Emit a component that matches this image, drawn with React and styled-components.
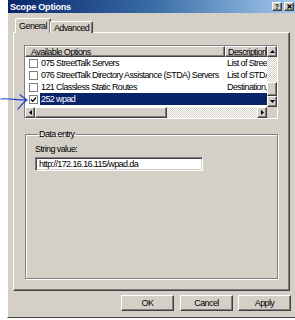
import React from "react";
import styled, { createGlobalStyle, css } from "styled-components";

const GREY = "#d4d0c8";
const NAVY = "#0a246a";

const GlobalStyle = createGlobalStyle`
  html, body { margin: 0; padding: 0; background: #fff; }
  body { font-family: "Liberation Sans", Arial, sans-serif; font-size: 9px; letter-spacing: -0.6px; color: #000; }
  * { box-sizing: border-box; }
`;

const raised = css`
  border: 1px solid;
  border-color: #fff #404040 #404040 #fff;
  box-shadow: inset -1px -1px 0 #808080;
  background: ${GREY};
`;

const sunken = css`
  border: 1px solid;
  border-color: #808080 #fff #fff #808080;
  box-shadow: inset 1px 1px 0 #404040, inset -1px -1px 0 ${GREY};
`;

const checker = css`
  background: repeating-conic-gradient(#fff 0 25%, ${GREY} 0 50%) 0 0 / 2px 2px;
`;

const Page = styled.div`
  position: relative;
  width: 295px;
  height: 320px;
  overflow: hidden;
  padding-left: 7px;
`;

const Dialog = styled.div`
  width: 292px;
  height: 318px;
  background: ${GREY};
  border-left: 1px solid #fff;
  border-bottom: 1px solid #404040;
  display: flex;
  flex-direction: column;
`;

const TitleBar = styled.div`
  height: 13px;
  flex: none;
  display: flex;
  align-items: center;
  justify-content: space-between;
  padding: 0 5px 0 2px;
  background: linear-gradient(90deg, ${NAVY} 0%, #3a6ea5 50%, #a6caf0 100%);
`;

const Title = styled.span`
  color: #fff;
  font-weight: bold;
  font-size: 9px;
  letter-spacing: -0.2px;
`;

const TitleButtons = styled.div`
  display: flex;
  gap: 2px;
`;

const CaptionButton = styled.div`
  ${raised};
  width: 10px;
  height: 9px;
  display: flex;
  align-items: center;
  justify-content: center;
  font-size: 7px;
  font-weight: bold;
  line-height: 1;
  letter-spacing: 0;
`;

const Body = styled.div`
  flex: 1;
  display: flex;
  flex-direction: column;
  padding: 5px 0 0 5px;
`;

const TabStrip = styled.div`
  display: flex;
  align-items: flex-end;
  height: 15px;
  padding-left: 2px;
  position: relative;
  z-index: 1;
  margin-bottom: -1px;
`;

const Tab = styled.div`
  border: 1px solid;
  border-color: #fff #404040 transparent #fff;
  border-bottom: none;
  border-radius: 2px 2px 0 0;
  background: ${GREY};
  display: flex;
  align-items: center;
  justify-content: center;
  width: ${(p) => p.$w}px;
  height: ${(p) => (p.$active ? 15 : 12)}px;
  margin-left: ${(p) => (p.$active ? 0 : -1)}px;
  padding-top: ${(p) => (p.$active ? 0 : 1)}px;
  box-shadow: inset -1px 0 0 #808080;
`;

const Panel = styled.div`
  width: 277px;
  height: 259px;
  border: 1px solid;
  border-color: #fff #404040 #404040 #fff;
  box-shadow: inset -1px -1px 0 #808080;
  display: flex;
  flex-direction: column;
  padding: 12px 0 0 10px;
`;

const ListView = styled.div`
  border: 1px solid;
  border-color: #808080 #fff #fff #808080;
  width: 254px;
  height: 74px;
  background: #fff;
  display: grid;
  grid-template-columns: 1fr 10px;
  grid-template-rows: 1fr 11px;
  overflow: hidden;
`;

const ListMain = styled.div`
  overflow: hidden;
  display: flex;
  flex-direction: column;
`;

const Header = styled.div`
  display: flex;
  height: 11px;
  flex: none;
`;

const HeaderCell = styled.div`
  ${raised};
  height: 11px;
  width: ${(p) => (p.$w ? `${p.$w}px` : "auto")};
  flex: ${(p) => (p.$w ? "none" : 1)};
  padding-left: ${(p) => (p.$w ? 5 : 2)}px;
  display: flex;
  align-items: center;
  white-space: nowrap;
  overflow: hidden;
`;

const Row = styled.div`
  display: flex;
  align-items: center;
  height: 12px;
  flex: none;
  padding-left: 4px;
`;

const Check = styled.div`
  width: 9px;
  height: 9px;
  flex: none;
  border: 1px solid #808080;
  background: #fff;
  display: flex;
  align-items: center;
  justify-content: center;
`;

const RowBody = styled.div`
  flex: 1;
  display: flex;
  align-items: center;
  height: 12px;
  margin-left: 2px;
  background: ${(p) => (p.$selected ? NAVY : "transparent")};
  color: ${(p) => (p.$selected ? "#fff" : "#000")};
`;

const NameCell = styled.div`
  width: 186px;
  flex: none;
  padding-left: 1px;
  white-space: nowrap;
  overflow: hidden;
`;

const DescCell = styled.div`
  flex: 1;
  padding-left: 1px;
  white-space: nowrap;
  overflow: hidden;
`;

const VScroll = styled.div`
  display: flex;
  flex-direction: column;
  ${checker};
`;

const HScroll = styled.div`
  display: flex;
  ${checker};
`;

const Corner = styled.div`
  background: ${GREY};
`;

const ScrollBtn = styled.div`
  ${raised};
  width: 10px;
  height: 11px;
  flex: none;
  display: flex;
  align-items: center;
  justify-content: center;
`;

const Thumb = styled.div`
  ${raised};
  flex: none;
  width: ${(p) => p.$w || "10px"};
  height: ${(p) => p.$h || "11px"};
`;

const Spacer = styled.div`
  flex: 1;
`;

const GroupBox = styled.fieldset`
  margin: 11px 0 0 1px;
  width: 253px;
  height: 149px;
  border: 1px solid #808080;
  box-shadow: 1px 1px 0 #fff, inset 1px 1px 0 #fff;
  padding: 5px 0 0 9px;
  display: flex;
  flex-direction: column;
`;

const Legend = styled.legend`
  padding: 0 1px;
  margin-left: 3px;
  font-size: 9px;
  line-height: 9px;
`;

const FieldLabel = styled.div`
  height: 10px;
  line-height: 10px;
`;

const TextBox = styled.div`
  ${sunken};
  background: #fff;
  width: 168px;
  height: 14px;
  margin-top: 3px;
  padding: 0 0 0 3px;
  display: flex;
  align-items: center;
  white-space: nowrap;
`;

const ButtonRow = styled.div`
  display: flex;
  justify-content: flex-end;
  padding: 4px 8px 0 0;
`;

const Button = styled.div`
  ${raised};
  width: 53px;
  height: 16px;
  margin-left: ${(p) => p.$gap}px;
  display: flex;
  align-items: center;
  justify-content: center;
`;

const Annotation = styled.svg`
  position: absolute;
  left: 0;
  top: 90px;
`;

const Arrow = ({ dir }) => {
  const paths = {
    up: "M1 5 L3.5 2 L6 5 Z",
    down: "M1 2 L3.5 5 L6 2 Z",
    left: "M5 1 L2 3.5 L5 6 Z",
    right: "M2 1 L5 3.5 L2 6 Z",
  };
  return (
    <svg width="7" height="7" viewBox="0 0 7 7">
      <path d={paths[dir]} fill="#000" />
    </svg>
  );
};

const CheckMark = () => (
  <svg width="7" height="7" viewBox="0 0 7 7">
    <path d="M1 3.5 L2.8 5.3 L6 1.5" stroke="#000" strokeWidth="1.3" fill="none" />
  </svg>
);

const rows = [
  { name: "075 StreetTalk Servers", desc: "List of StreetTalk Servers", checked: false },
  { name: "076 StreetTalk Directory Assistance (STDA) Servers", desc: "List of STDA Servers", checked: false },
  { name: "121 Classless Static Routes", desc: "Destination, mask and router", checked: false },
  { name: "252 wpad", desc: "", checked: true, selected: true },
];

export default function App() {
  return (
    <Page>
      <GlobalStyle />
      <Dialog>
        <TitleBar>
          <Title>Scope Options</Title>
          <TitleButtons>
            <CaptionButton>?</CaptionButton>
            <CaptionButton>
              <svg width="5" height="5" viewBox="0 0 5 5">
                <path d="M0.5 0.5 L4.5 4.5 M4.5 0.5 L0.5 4.5" stroke="#000" strokeWidth="1.2" />
              </svg>
            </CaptionButton>
          </TitleButtons>
        </TitleBar>
        <Body>
          <TabStrip>
            <Tab $active $w={36}>General</Tab>
            <Tab $w={43}>Advanced</Tab>
          </TabStrip>
          <Panel>
            <ListView>
              <ListMain>
                <Header>
                  <HeaderCell $w={200}>Available Options</HeaderCell>
                  <HeaderCell>Description</HeaderCell>
                </Header>
                {rows.map((r) => (
                  <Row key={r.name}>
                    <Check>{r.checked && <CheckMark />}</Check>
                    <RowBody $selected={r.selected}>
                      <NameCell>{r.name}</NameCell>
                      <DescCell>{r.desc}</DescCell>
                    </RowBody>
                  </Row>
                ))}
              </ListMain>
              <VScroll>
                <ScrollBtn><Arrow dir="up" /></ScrollBtn>
                <Spacer />
                <Thumb $h="14px" />
                <ScrollBtn><Arrow dir="down" /></ScrollBtn>
              </VScroll>
              <HScroll>
                <ScrollBtn><Arrow dir="left" /></ScrollBtn>
                <Thumb $w="132px" />
                <Spacer />
                <ScrollBtn><Arrow dir="right" /></ScrollBtn>
              </HScroll>
              <Corner />
            </ListView>
            <GroupBox>
              <Legend>Data entry</Legend>
              <FieldLabel>String value:</FieldLabel>
              <TextBox>http://172.16.16.115/wpad.da</TextBox>
            </GroupBox>
          </Panel>
          <ButtonRow>
            <Button $gap={0}>OK</Button>
            <Button $gap={6}>Cancel</Button>
            <Button $gap={5}>Apply</Button>
          </ButtonRow>
        </Body>
      </Dialog>
      <Annotation width="32" height="24" viewBox="0 0 32 24">
        <path
          d="M1 9 C8 8 16 10 26 10 M20 5 C23 7 25 9 27 10 C24 12 21 15 18 19"
          stroke="#1f3fd0"
          strokeWidth="1.2"
          fill="none"
          strokeLinecap="round"
        />
      </Annotation>
    </Page>
  );
}
